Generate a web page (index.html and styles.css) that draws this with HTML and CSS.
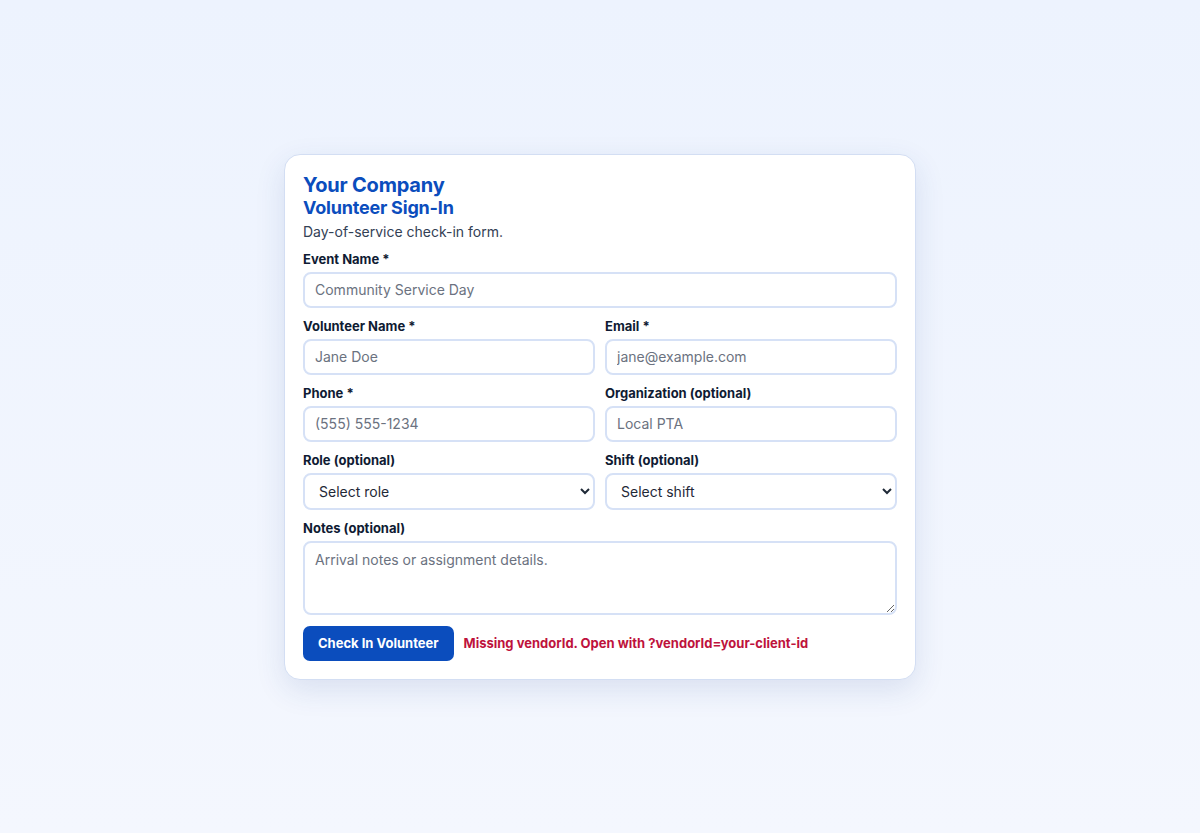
FILE: index.html
```html
<!DOCTYPE html>
<html lang="en">
<head>
<meta charset="utf-8">
<title>Volunteer Sign-In</title>
<link rel="stylesheet" href="styles.css">
</head>
<body>
<main class="card">
  <h1 class="company">Your Company</h1>
  <h2 class="title">Volunteer Sign-In</h2>
  <p class="subtitle">Day-of-service check-in form.</p>
  <form class="form">
    <div class="field">
      <label class="label">Event Name *</label>
      <input class="input" type="text" placeholder="Community Service Day">
    </div>
    <div class="row">
      <div class="field">
        <label class="label">Volunteer Name *</label>
        <input class="input" type="text" placeholder="Jane Doe">
      </div>
      <div class="field">
        <label class="label">Email *</label>
        <input class="input" type="email" placeholder="jane@example.com">
      </div>
    </div>
    <div class="row">
      <div class="field">
        <label class="label">Phone *</label>
        <input class="input" type="tel" placeholder="(555) 555-1234">
      </div>
      <div class="field">
        <label class="label">Organization (optional)</label>
        <input class="input" type="text" placeholder="Local PTA">
      </div>
    </div>
    <div class="row">
      <div class="field">
        <label class="label">Role (optional)</label>
        <select class="input select"><option>Select role</option></select>
      </div>
      <div class="field">
        <label class="label">Shift (optional)</label>
        <select class="input select"><option>Select shift</option></select>
      </div>
    </div>
    <div class="field">
      <label class="label">Notes (optional)</label>
      <textarea class="input textarea" placeholder="Arrival notes or assignment details."></textarea>
    </div>
    <div class="actions">
      <button class="button" type="button">Check In Volunteer</button>
      <span class="error">Missing vendorId. Open with ?vendorId=your-client-id</span>
    </div>
  </form>
</main>
</body>
</html>
```
FILE: styles.css
```css
* { box-sizing: border-box; }
html, body { margin: 0; padding: 0; }
body {
  min-height: 100vh;
  display: flex;
  align-items: center;
  justify-content: center;
  background: linear-gradient(180deg, #edf3fe 0%, #f4f7fe 100%);
  font-family: Inter, "Liberation Sans", Arial, sans-serif;
  color: #0f172a;
}
.card {
  width: 632px;
  background: #ffffff;
  border: 1px solid #d3def3;
  border-radius: 16px;
  padding: 18px 18px 18px;
  box-shadow: 0 10px 30px rgba(30, 64, 140, 0.12);
}
.company {
  margin: 0;
  font-size: 20px;
  line-height: 24px;
  font-weight: 700;
  color: #0b4dbd;
  letter-spacing: -0.2px;
}
.title {
  margin: 0;
  font-size: 18px;
  line-height: 22px;
  font-weight: 700;
  color: #0b4dbd;
  letter-spacing: -0.2px;
}
.subtitle {
  margin: 3px 0 0;
  font-size: 14px;
  line-height: 20px;
  color: #334155;
}
.form {
  display: flex;
  flex-direction: column;
  gap: 10px;
  margin-top: 9px;
}
.row {
  display: grid;
  grid-template-columns: 1fr 1fr;
  gap: 10px;
}
.field {
  display: flex;
  flex-direction: column;
  gap: 5px;
}
.label {
  font-size: 13px;
  line-height: 16px;
  font-weight: 700;
  color: #0f1b33;
}
.input {
  width: 100%;
  height: 36px;
  border: 2px solid #d6e1f6;
  border-radius: 8px;
  padding: 0 10px;
  font-family: inherit;
  font-size: 14px;
  color: #1f2937;
  background: #ffffff;
  outline: none;
}
.input::placeholder { color: #6b7280; }
.select {
  height: 37px;
  padding: 0 8px 0 10px;
  color: #1f2937;
}
.textarea {
  height: 74px;
  padding: 8px 10px;
  resize: vertical;
  line-height: 18px;
}
.actions {
  display: flex;
  align-items: center;
  gap: 10px;
  margin-top: 1px;
}
.button {
  height: 35px;
  padding: 0 15px;
  border: none;
  border-radius: 7px;
  background: #0b4dbd;
  color: #ffffff;
  font-family: inherit;
  font-size: 13px;
  font-weight: 700;
}
.error {
  font-size: 13px;
  font-weight: 700;
  color: #be123c;
}
```
